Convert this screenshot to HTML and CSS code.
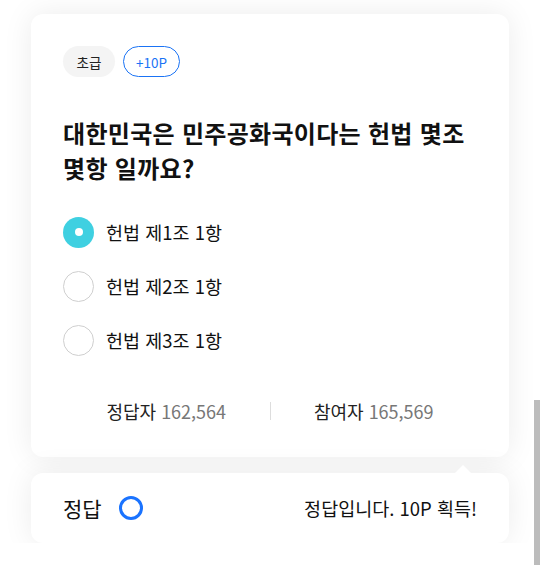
FILE: index.html
```html
<!DOCTYPE html>
<html lang="ko">
<head>
    <meta charset="UTF-8">
    <meta name="viewport" content="width=device-width, initial-scale=1.0">
    <title>오늘의 퀴즈</title>
    <link rel="stylesheet" href="styles.css">
</head>
<body>
    <div class="quiz-card">
        <div class="tags">
            <span class="tag tag-level">초급</span>
            <span class="tag tag-point">+10P</span>
        </div>

        <h2 class="question">대한민국은 민주공화국이다는 헌법 몇조<br>몇항 일까요?</h2>

        <ul class="options">
            <li class="option selected"><span class="radio"></span>헌법 제1조 1항</li>
            <li class="option"><span class="radio"></span>헌법 제2조 1항</li>
            <li class="option"><span class="radio"></span>헌법 제3조 1항</li>
        </ul>

        <div class="stats">
            <div class="stat">정답자 <span class="num">162,564</span></div>
            <div class="stat-divider"></div>
            <div class="stat">참여자 <span class="num">165,569</span></div>
        </div>
    </div>

    <div class="result-card">
        <div class="result-label">정답 <span class="ring"></span></div>
        <div class="result-msg">정답입니다. 10P 획득!</div>
    </div>

    <div class="scroll-thumb"></div>
</body>
</html>
```

FILE: styles.css
```css
body {
    margin: 0;
    padding: 14px 31px 0;
    background-color: #fff;
    font-family: "Noto Sans CJK KR", "Noto Sans", sans-serif;
    color: #111;
}
.quiz-card {
    background-color: #fff;
    border-radius: 12px;
    padding: 32px 32px 34px;
    box-shadow: 0 0 30px rgba(0,0,0,0.08);
}
.tags {
    display: flex;
    gap: 8px;
}
.tag {
    height: 31px;
    box-sizing: border-box;
    display: flex;
    align-items: center;
    justify-content: center;
    border-radius: 16px;
    font-size: 13.5px;
}
.tag-level {
    width: 52px;
    background-color: #f4f4f4;
    color: #222;
}
.tag-point {
    width: 57px;
    border: 1px solid #1a73f5;
    color: #1a73f5;
}
.question {
    margin: 38px 0 0;
    font-size: 24px;
    font-weight: bold;
    line-height: 35px;
    letter-spacing: 0.3px;
}
.options {
    list-style: none;
    margin: 20px 0 0;
    padding: 0;
}
.option {
    height: 54px;
    display: flex;
    align-items: center;
    gap: 12px;
    font-size: 18.5px;
}
.radio {
    width: 31px;
    height: 31px;
    box-sizing: border-box;
    border-radius: 50%;
    border: 1.5px solid #cfcfcf;
    display: flex;
    align-items: center;
    justify-content: center;
}
.option.selected .radio {
    border: none;
    background-color: #3fd0e1;
}
.option.selected .radio::after {
    content: "";
    width: 8px;
    height: 8px;
    border-radius: 50%;
    background-color: #fff;
}
.stats {
    margin-top: 32px;
    display: flex;
    align-items: center;
    height: 24px;
}
.stat {
    flex: 1;
    text-align: center;
    font-size: 18px;
    color: #222;
}
.stat .num {
    color: #777;
}
.stat-divider {
    width: 1px;
    height: 18px;
    background-color: #ddd;
}
.result-card {
    position: relative;
    margin-top: 16px;
    height: 70px;
    background-color: #fff;
    border-radius: 12px;
    padding: 0 32px;
    display: flex;
    align-items: center;
    justify-content: space-between;
    box-shadow: 0 0 30px rgba(0,0,0,0.08);
}
.result-card::before {
    content: "";
    position: absolute;
    top: -8px;
    right: 38px;
    border-left: 8px solid transparent;
    border-right: 8px solid transparent;
    border-bottom: 8px solid #fff;
}
.result-label {
    display: flex;
    align-items: center;
    gap: 17px;
    font-size: 21px;
}
.ring {
    width: 24px;
    height: 24px;
    box-sizing: border-box;
    border: 3.5px solid #1a73ff;
    border-radius: 50%;
}
.result-msg {
    font-size: 18.5px;
}
.scroll-thumb {
    position: fixed;
    right: 0;
    top: 400px;
    width: 6px;
    height: 165px;
    background-color: #bcbcbc;
}
```
